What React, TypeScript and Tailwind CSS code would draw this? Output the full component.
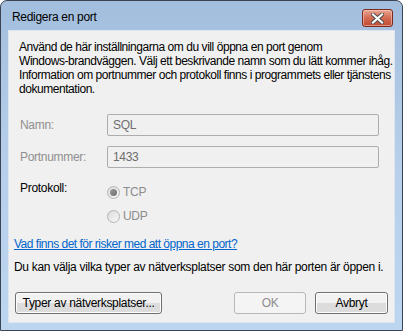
const font = { fontFamily: '"Segoe UI", "Liberation Sans", Arial, sans-serif' };

function Radio({ checked }: { checked?: boolean }) {
    return (
        <span className="h-[13px] w-[13px] rounded-full border border-[#b4b4b4] bg-gradient-to-br from-[#dcdcdc] to-[#f8f8f8] flex items-center justify-center shrink-0">
            {checked && <span className="h-[7px] w-[7px] rounded-full bg-gradient-to-br from-[#9a9a9a] to-[#6f6f6f]" />}
        </span>
    );
}

function Button({ label, disabled, className }: { label: string; disabled?: boolean; className?: string }) {
    const look = disabled
        ? "border-[#b5b9bc] bg-[#f4f4f4] text-[#8d8d8d]"
        : "border-[#707070] bg-gradient-to-b from-[#f2f2f2] from-50% to-[#dcdcdc] to-50% text-black shadow-[inset_0_0_0_1px_#fcfcfc]";
    return (
        <button className={`h-[22px] rounded-[3px] border text-[12px] leading-none whitespace-nowrap flex items-center justify-center ${look} ${className ?? ""}`}>
            {label}
        </button>
    );
}

function Field({ label, value }: { label: string; value: string }) {
    return (
        <div className="flex items-center h-[22px]">
            <span className="w-[87px] pl-[11px] box-content text-[#8f8f8f]">{label}</span>
            <div className="w-[272px] h-[22px] border border-[#adadad] rounded-[2px] bg-[#f0f0f0] flex items-center pl-[5px] text-[#6d6d6d]">
                {value}
            </div>
        </div>
    );
}

export default function App() {
    return (
        <div className="w-[403px] h-[331px] bg-white tracking-[-0.3px]" style={font}>
            <div className="w-full h-full border border-[#3a4454] rounded-t-[7px] bg-gradient-to-b from-[#a3bedd] via-[#b7cfea] to-[#bdd6f0] flex flex-col px-[7px] pb-[7px] text-[12px]">
                <div className="h-[29px] flex items-start justify-between shrink-0">
                    <span className="pl-[4px] pt-[9px] leading-[14px] text-black">Redigera en port</span>
                    <div className="mt-[8px] mr-[2px] w-[31px] h-[18px] rounded-[3px] border border-[#7d2a1c] bg-gradient-to-b from-[#e8a792] via-[#d36b52] to-[#c04a30] flex items-center justify-center shadow-[inset_0_0_0_1px_rgba(255,220,210,0.5)]">
                        <svg width="13" height="11" viewBox="0 0 13 11">
                            <path d="M2 1.5 L11 9.5 M11 1.5 L2 9.5" stroke="#4a4a4a" strokeWidth="4" strokeLinecap="square" />
                            <path d="M2 1.5 L11 9.5 M11 1.5 L2 9.5" stroke="#ffffff" strokeWidth="2.2" strokeLinecap="square" />
                        </svg>
                    </div>
                </div>
                <div className="flex-1 bg-[#f0f0f0] border border-[#dde6f0] flex flex-col leading-[14px] text-black">
                    <p className="mt-[9px] px-[10px] whitespace-nowrap tracking-[-0.45px]">
                        Använd de här inställningarna om du vill öppna en port genom
                        <br />
                        Windows-brandväggen. Välj ett beskrivande namn som du lätt kommer ihåg.
                        <br />
                        Information om portnummer och protokoll finns i programmets eller tjänstens
                        <br />
                        dokumentation.
                    </p>
                    <div className="mt-[18px] flex flex-col gap-[10px]">
                        <Field label="Namn:" value="SQL" />
                        <Field label="Portnummer:" value="1433" />
                    </div>
                    <div className="mt-[13px] flex">
                        <span className="w-[87px] pl-[11px] box-content">Protokoll:</span>
                        <div className="mt-[4px] flex flex-col gap-[10px] text-[#8d8d8d]">
                            <label className="flex items-center gap-[3px] h-[14px]">
                                <Radio checked />
                                TCP
                            </label>
                            <label className="flex items-center gap-[3px] h-[14px]">
                                <Radio />
                                UDP
                            </label>
                        </div>
                    </div>
                    <a className="mt-[14px] ml-[5px] self-start text-[#0066cc] underline tracking-[-0.5px]">Vad finns det för risker med att öppna en port?</a>
                    <p className="mt-[9px] ml-[5px] whitespace-nowrap">Du kan välja vilka typer av nätverksplatser som den här porten är öppen i.</p>
                    <div className="mt-[18px] flex px-[6px]">
                        <Button label="Typer av nätverksplatser..." className="w-[147px]" />
                        <Button label="OK" disabled className="w-[72px] ml-auto" />
                        <Button label="Avbryt" className="w-[73px] ml-[9px]" />
                    </div>
                </div>
            </div>
        </div>
    );
}
